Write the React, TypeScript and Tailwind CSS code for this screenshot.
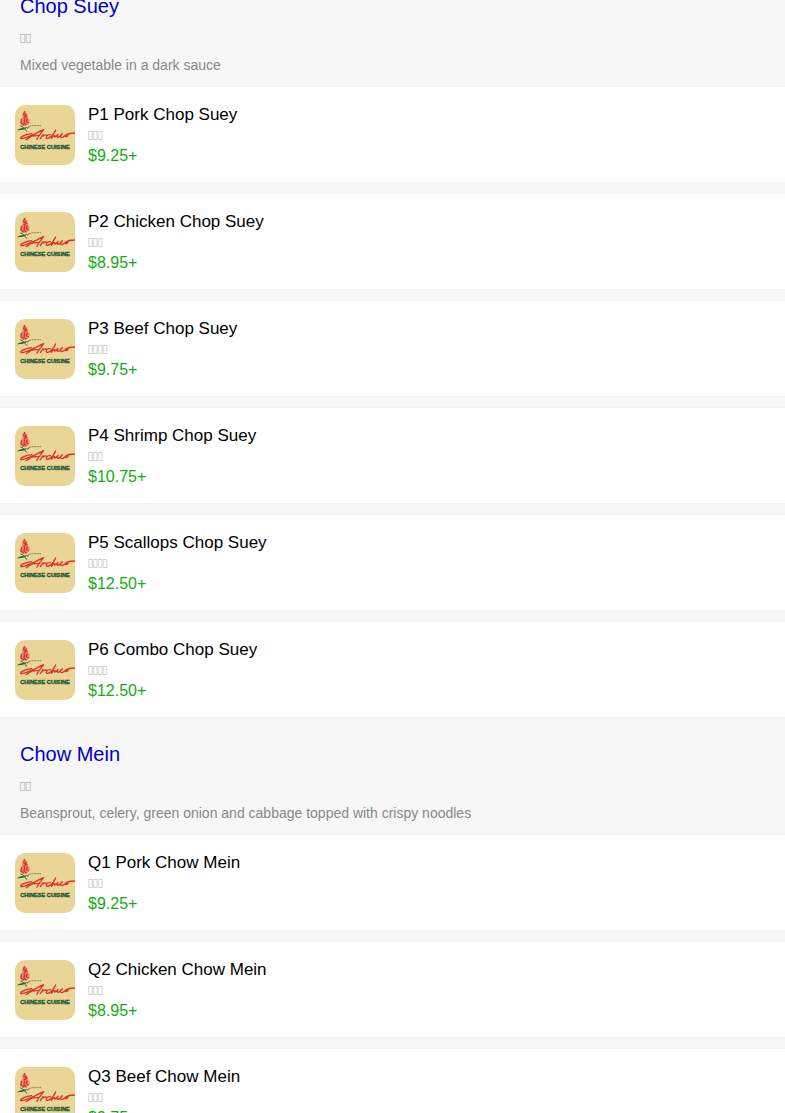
import React from 'react';

type Dish = { name: string; nativeName: string; price: string };
type Category = { title: string; nativeTitle: string; description: string; dishes: Dish[] };

const categories: Category[] = [
  {
    title: 'Chop Suey',
    nativeTitle: '\uE9F1\uE9F2',
    description: 'Mixed vegetable in a dark sauce',
    dishes: [
      { name: 'P1 Pork Chop Suey', nativeName: '\uE9F1\uE9F2\uE9F3', price: '$9.25+' },
      { name: 'P2 Chicken Chop Suey', nativeName: '\uE9F1\uE9F2\uE9F3', price: '$8.95+' },
      { name: 'P3 Beef Chop Suey', nativeName: '\uE9F1\uE9F2\uE9F3\uE9F4', price: '$9.75+' },
      { name: 'P4 Shrimp Chop Suey', nativeName: '\uE9F1\uE9F2\uE9F3', price: '$10.75+' },
      { name: 'P5 Scallops Chop Suey', nativeName: '\uE9F1\uE9F2\uE9F3\uE9F4', price: '$12.50+' },
      { name: 'P6 Combo Chop Suey', nativeName: '\uE9F1\uE9F2\uE9F3\uE9F4', price: '$12.50+' },
    ],
  },
  {
    title: 'Chow Mein',
    nativeTitle: '\uE9F1\uE9F2',
    description: 'Beansprout, celery, green onion and cabbage topped with crispy noodles',
    dishes: [
      { name: 'Q1 Pork Chow Mein', nativeName: '\uE9F1\uE9F2\uE9F3', price: '$9.25+' },
      { name: 'Q2 Chicken Chow Mein', nativeName: '\uE9F1\uE9F2\uE9F3', price: '$8.95+' },
      { name: 'Q3 Beef Chow Mein', nativeName: '\uE9F1\uE9F2\uE9F3', price: '$9.75+' },
    ],
  },
];

function Logo() {
  return (
    <svg viewBox="0 0 180 180" className="size-[60px] shrink-0 rounded-[10px] bg-[#e9d595]" role="img" aria-label="Chinese Cuisine">
      {/* Flower */}
      <path d="M29 17 L37 27 L38 36 L44 44 L43 54 L34 62 L24 63 L16 54 L17 42 L22 36 L22 27 Z" fill="#ee8a70" />
      <path d="M29 18 L26 29 L35 34 L26 40 M20 42 L18 54 L26 61 M29 42 L27 54 L34 60 M37 40 L34 50 L41 54 M34 26 L29 34" fill="none" stroke="#dc302a" strokeWidth="4" />
      {/* Stem and leaves */}
      <path d="M6 76 C14 68 24 70 36 65 C32 76 18 74 6 76 Z" fill="#256b36" />
      <path d="M16 62 L26 68 L36 80 M36 70 L44 64" fill="none" stroke="#256b36" strokeWidth="3" />
      <path d="M42 65 L50 62 L78 62" fill="none" stroke="#7d8a5a" strokeWidth="3" strokeDasharray="6 2" />
      {/* Signature */}
      <path
        d="M50 86 C32 88 12 97 18 101 C30 102 58 88 86 74 C78 84 70 94 66 103 M34 104 C48 94 66 82 86 74 M40 94 L74 91 M76 101 L84 89 C82 98 86 88 93 90 M106 89 C96 87 88 101 99 100 C109 96 118 84 122 75 C116 84 111 92 109 100 C115 92 121 88 119 96 C122 98 126 92 129 88 C125 95 127 100 133 95 C144 87 144 83 138 89 C133 100 142 100 149 93 C156 84 163 89 156 94 C146 98 150 84 180 84"
        fill="none"
        stroke="#de3326"
        strokeWidth="4"
        strokeLinecap="round"
        strokeLinejoin="round"
      />
      <text x="90" y="133" textAnchor="middle" className="fill-[#17563b] stroke-[#17563b] stroke-1 text-[17px] font-bold">
        CHINESE CUISINE
      </text>
    </svg>
  );
}

function DishRow({ dish }: { dish: Dish }) {
  return (
    <li className="flex gap-[13px] border-y border-[#f2f2f2] bg-white px-[15px] pt-[18px] pb-[15px]">
      <Logo />
      <div className="min-w-0">
        <h3 className="text-[17px] leading-5 text-black">{dish.name}</h3>
        <p className="font-['DejaVu_Sans_Condensed',sans-serif] text-[9px] leading-5 text-[#aaaaaa]">{dish.nativeName}</p>
        <p className="text-base leading-[22px] text-[#10ad10]">{dish.price}</p>
      </div>
    </li>
  );
}

export default function App() {
  return (
    <main className="-mt-[30px] bg-[#f7f7f7] font-['Liberation_Sans',Arial,sans-serif]">
      {categories.map((category) => (
        <section key={category.title}>
          <header className="px-5 pt-[22px] pb-[11px]">
            <h2 className="text-xl leading-7">
              <a href="#" className="text-[#0000cc]">{category.title}</a>
            </h2>
            <p className="mt-2 font-['DejaVu_Sans_Condensed',sans-serif] text-[10px] leading-5 text-[#999999]">
              {category.nativeTitle}
            </p>
            <p className="mt-[7px] text-sm leading-5 text-[#888888]">{category.description}</p>
          </header>
          <ul className="flex flex-col gap-[10px]">
            {category.dishes.map((dish) => (
              <DishRow key={dish.name} dish={dish} />
            ))}
          </ul>
        </section>
      ))}
    </main>
  );
}
